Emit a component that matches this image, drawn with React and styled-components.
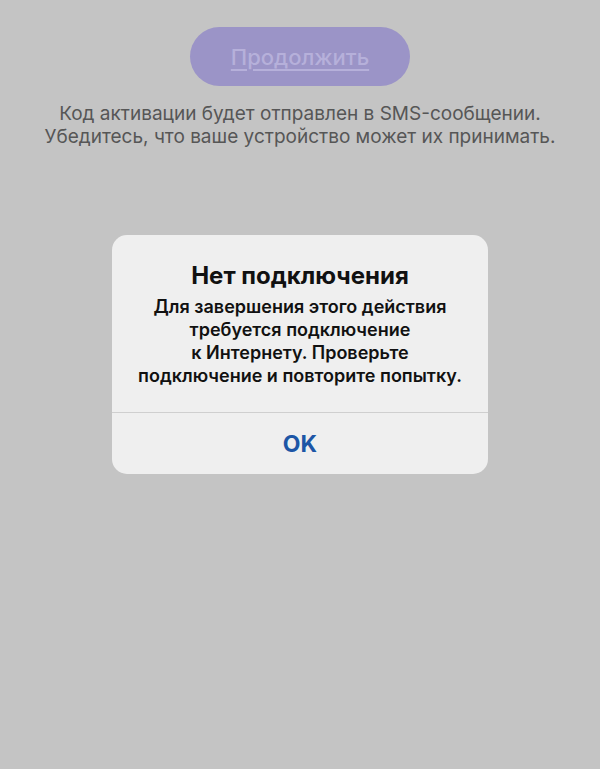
import React from "react";
import styled, { createGlobalStyle } from "styled-components";

const Global = createGlobalStyle`
  html, body {
    margin: 0;
    padding: 0;
    background: #c4c4c4;
    font-family: Inter, "Noto Sans", sans-serif;
  }
`;

const Screen = styled.div`
  position: relative;
  width: 600px;
  height: 769px;
  background: #c4c4c4;
  display: flex;
  flex-direction: column;
  align-items: center;
  padding-top: 27px;
  box-sizing: border-box;
`;

const Continue = styled.button`
  width: 220px;
  height: 59px;
  border: none;
  border-radius: 30px;
  background: #9b94c7;
  color: #b6b0da;
  font-family: inherit;
  font-size: 22px;
  font-weight: 500;
  text-decoration: underline;
  text-underline-offset: 4px;
`;

const Hint = styled.p`
  margin: 16px 0 0;
  text-align: center;
  color: #565656;
  font-size: 19px;
  line-height: 23px;
`;

const Backdrop = styled.div`
  position: absolute;
  inset: 0;
  display: flex;
  justify-content: center;
  padding-top: 235px;
  box-sizing: border-box;
`;

const Alert = styled.div`
  width: 376px;
  height: 239px;
  background: #efefef;
  border-radius: 15px;
  display: flex;
  flex-direction: column;
  overflow: hidden;
`;

const Body = styled.div`
  flex: 1;
  padding-top: 27px;
  text-align: center;
  color: #111;
`;

const Title = styled.h2`
  margin: 0;
  font-size: 24px;
  font-weight: 700;
  line-height: 28px;
`;

const Message = styled.p`
  margin: 5px 0 0;
  font-size: 18px;
  font-weight: 600;
  line-height: 23px;
`;

const Action = styled.button`
  height: 62px;
  border: none;
  border-top: 1px solid #cfcfcf;
  background: transparent;
  color: #1d56a6;
  font-family: inherit;
  font-size: 23px;
  font-weight: 700;
`;

export default function App() {
  return (
    <>
      <Global />
      <Screen>
        <Continue>Продолжить</Continue>
        <Hint>
          Код активации будет отправлен в SMS-сообщении.
          <br />
          Убедитесь, что ваше устройство может их принимать.
        </Hint>
        <Backdrop>
          <Alert>
            <Body>
              <Title>Нет подключения</Title>
              <Message>
                Для завершения этого действия
                <br />
                требуется подключение
                <br />к Интернету. Проверьте
                <br />
                подключение и повторите попытку.
              </Message>
            </Body>
            <Action>OK</Action>
          </Alert>
        </Backdrop>
      </Screen>
    </>
  );
}
